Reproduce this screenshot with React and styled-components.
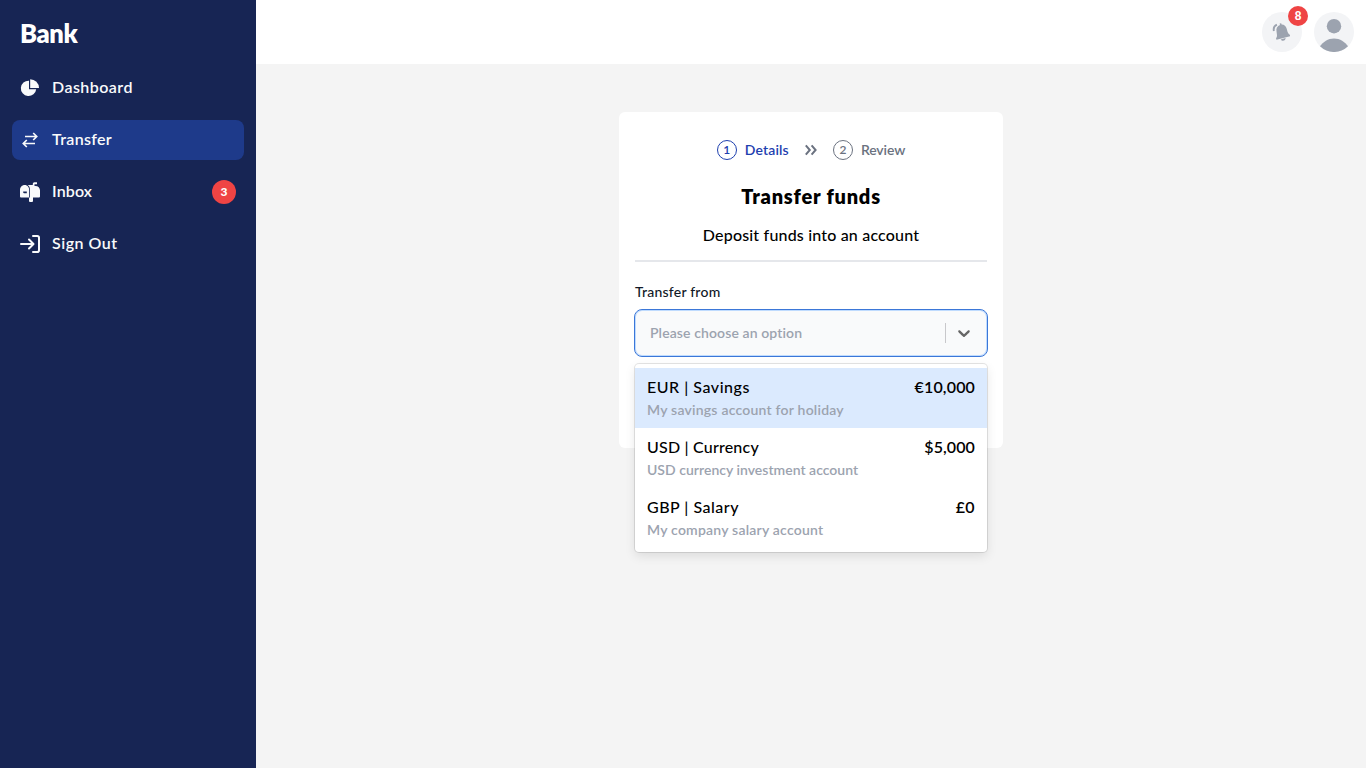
import React from "react";
import styled, { createGlobalStyle } from "styled-components";

const Global = createGlobalStyle`
  * { box-sizing: border-box; }
  body { margin: 0; background: #f4f4f4; font-family: Lato, "Open Sans", sans-serif; font-size: 16px; line-height: 24px; font-weight: 500; color: #000; }
  svg { display: block; flex: none; }
`;
const Shell = styled.div`display: flex; height: 100vh; overflow: hidden;`;
const Sidebar = styled.aside`width: 256px; flex: none; background: #172554; padding: 12px; color: #fff;`;
const Brand = styled.div`height: 44px; padding-left: 8px; font-size: 25.5px; line-height: 43px; font-weight: 800; letter-spacing: -0.4px;`;
const Nav = styled.nav`display: flex; flex-direction: column; gap: 12px; margin-top: 12px;`;
const NavItem = styled.a`
  display: flex; align-items: center; height: 40px; padding: 0 8px; border-radius: 8px;
  font-weight: 600; color: #f9fafb;
  background: ${(p) => (p.$active ? "#1e3a8a" : "transparent")};
`;
const NavLabel = styled.span`
  flex: 1; margin-left: 12px; padding-bottom: 3px; white-space: nowrap;
  letter-spacing: ${(p) => p.$tracking || 0}px;
`;
const Badge = styled.span`
  width: ${(p) => p.$size}px; height: ${(p) => p.$size}px; border-radius: 50%;
  display: flex; align-items: center; justify-content: center;
  background: #ef4444; color: #fff; font-size: 12px; font-weight: 900; line-height: 12px; padding-bottom: 1px;
`;
const Main = styled.div`flex: 1; display: flex; flex-direction: column; align-items: center;`;
const Topbar = styled.header`
  width: 100%; height: 64px; background: #fff; padding: 0 12px;
  display: flex; align-items: center; justify-content: flex-end; gap: 12px;
`;
const RoundButton = styled.button`
  position: relative; width: 40px; height: 40px; padding: 0; border: 0; border-radius: 50%; background: #f3f4f6;
  display: flex; align-items: center; justify-content: center;
  & > ${Badge} { position: absolute; top: -6px; right: -6px; }
`;
const Card = styled.section`
  margin-top: 48px; width: 384px; height: 336px; background: #fff; border-radius: 6px; padding: 28px 16px 16px;
`;
const Steps = styled.div`display: flex; align-items: center; justify-content: center; height: 20px; gap: 16px;`;
const Step = styled.div`
  display: flex; align-items: center; gap: 8px; font-size: 14px; line-height: 20px; font-weight: 600;
  letter-spacing: ${(p) => p.$tracking || 0}px;
  color: ${(p) => (p.$active ? "#1e40af" : "#6b7280")};
`;
const StepNumber = styled.span`
  width: 20px; height: 20px; border: 1px solid currentColor; border-radius: 50%;
  display: flex; align-items: center; justify-content: center; font-size: 12px; line-height: 18px; letter-spacing: 0;
`;
const Title = styled.h1`margin: 22px 0 0; text-align: center; font-size: 20px; line-height: 28px; font-weight: 800; letter-spacing: 0.78px;`;
const Subtitle = styled.p`
  margin: 0; padding: 13px 0 13px; text-align: center; border-bottom: 2px solid #e5e7eb;
  letter-spacing: 0.18px;
`;
const FieldLabel = styled.label`display: block; margin-top: 20px; font-size: 14px; line-height: 20px; letter-spacing: 0.22px; color: #111827;`;
const Field = styled.div`position: relative; margin-top: 7px;`;
const Control = styled.div`
  height: 48px; margin: 0 -1px; display: flex; align-items: center; background: #f9fafb;
  border: 1px solid #3b77d8; border-radius: 8px; box-shadow: inset 0 0 0 1px #bfdbfe;
`;
const Placeholder = styled.span`flex: 1; padding-left: 15px; font-size: 14px; line-height: 20px; font-weight: 600; letter-spacing: 0.11px; color: #9ca3af;`;
const Chevron = styled.span`
  width: 42px; height: 20px; border-left: 1px solid #c8c8cb;
  display: flex; align-items: center; justify-content: center; padding-right: 6px;
`;
const Menu = styled.div`
  position: absolute; z-index: 1; top: 55px; left: 0; right: 0; padding: 4px 0; background: #fff; border-radius: 4px;
  box-shadow: 0 0 0 1px rgba(0,0,0,.1), 0 4px 11px rgba(0,0,0,.1);
`;
const Option = styled.div`height: 60px; padding: 7px 12px; background: ${(p) => (p.$focused ? "#dbeafe" : "#fff")};`;
const OptionHead = styled.div`display: flex; justify-content: space-between; height: 24px; white-space: nowrap;`;
const Name = styled.span`letter-spacing: ${(p) => p.$tracking}px;`;
const Amount = styled.span`letter-spacing: ${(p) => p.$tracking}px; font-weight: 600;`;
const Note = styled.div`font-size: 14px; line-height: 21px; font-weight: 600; color: #9ca3af; white-space: nowrap; letter-spacing: ${(p) => p.$tracking}px;`;

const PieIcon = () => (
  <svg width="20" height="20" viewBox="0 0 20 20" fill="currentColor">
    <path d="M9 2.700V11.200H16.200A7.700 7.700 0 1 1 9 2.700Z" />
    <path d="M10.200 1.200A8.800 8.800 0 0 1 19 10H10.200Z" />
  </svg>
);
const TransferIcon = () => (
  <svg width="20" height="20" viewBox="0 0 20 20" fill="none" stroke="currentColor" strokeWidth="1.700">
    <path d="M5 6.500h11.500M13.200 3l3.500 3.500-3.500 3.500M15 13.500H3.500M6.800 10l-3.500 3.500L6.800 17" />
  </svg>
);
const MailboxIcon = () => (
  <svg width="20" height="20" viewBox="0 0 20 20" fill="currentColor">
    <path fillRule="evenodd" d="M4.700 3C2 3 0 5.200 0 8V14.500Q0 15.500 1 15.500H9.200V8C9.200 5.200 7.500 3 4.700 3ZM3.200 9.500H6.800V11.300H4.200Q3.200 11.300 3.200 10.300Z" />
    <path d="M7.800 3H12.800V1.800Q12.800 .3 14.300 .3H17V2.300H14.500V7H13.700V4H15.500C18.200 4 20 6 20 8.300V14.500Q20 15.500 19 15.500H13V19Q13 20 12 20H10Q9 20 9 19V15.500H10V8C10 5.800 9.300 4 7.800 3Z" />
  </svg>
);
const SignOutIcon = () => (
  <svg width="20" height="20" viewBox="0 0 20 20" fill="none" stroke="currentColor" strokeWidth="2" strokeLinecap="round" strokeLinejoin="round">
    <path d="M1 10h12M9 5.500l4.500 4.500L9 14.500M13 2h4.200Q19 2 19 3.800v12.400Q19 18 17.200 18H13" />
  </svg>
);
const BellIcon = () => (
  <svg width="20" height="20" viewBox="0 0 20 20" fill="#9ca3af">
    <path d="M7.600 1.600 9.200 1.200 9.600 2.600C12.200 2.500 14 4.200 14.700 6.800L15.600 10.100Q16 11.500 18 13V14.200L4.500 17.700 4 16.500Q5.200 14.800 5 13.300L4.500 9.300C4 6.500 5.200 4.400 8 3.100Z" />
    <path d="m8.600 17.400 5-1.300c.2 2.700-3.500 3.600-5 1.300Z" />
    <path d="M1.900 9C1.200 6 2.300 3.800 4.900 2.600" fill="none" stroke="#9ca3af" strokeWidth="1.900" />
  </svg>
);
const AvatarIcon = () => (
  <svg width="40" height="40" viewBox="0 0 40 40" fill="#9ca3af">
    <circle cx="20" cy="14.200" r="7.200" />
    <path d="M6 34.300C9 29.700 14 26.400 20 26.400s11 3.300 14 7.900A20 20 0 0 1 6 34.300Z" />
  </svg>
);
const DoubleChevron = () => (
  <svg width="12" height="12" viewBox="0 0 12 12" fill="none" stroke="#6b7280" strokeWidth="2">
    <path d="m.8 1.400 4 4.600-4 4.600M6.600 1.400l4 4.600-4 4.600" />
  </svg>
);
const ChevronIcon = () => (
  <svg width="20" height="20" viewBox="0 0 20 20" fill="#666">
    <path d="M4.516 7.548c0.436-0.446 1.043-0.481 1.576 0l3.908 3.747 3.908-3.747c0.533-0.481 1.141-0.446 1.574 0 0.436 0.445 0.408 1.197 0 1.615-0.406 0.418-4.695 4.502-4.695 4.502-0.217 0.223-0.502 0.335-0.787 0.335s-0.570-0.112-0.789-0.335c0 0-4.287-4.084-4.695-4.502s-0.436-1.170 0-1.615z" />
  </svg>
);

const links = [
  { label: "Dashboard", icon: <PieIcon />, tracking: 0.45 },
  { label: "Transfer", icon: <TransferIcon />, active: true, tracking: 0.32 },
  { label: "Inbox", icon: <MailboxIcon />, count: 3, tracking: 0.15 },
  { label: "Sign Out", icon: <SignOutIcon />, tracking: 0.5 },
];
const accounts = [
  { name: "EUR | Savings", amount: "€10,000", note: "My savings account for holiday", t: [0.52, 0.15, 0.22] },
  { name: "USD | Currency", amount: "$5,000", note: "USD currency investment account", t: [0.2, 0.1, 0.02] },
  { name: "GBP | Salary", amount: "£0", note: "My company salary account", t: [0.5, 0.4, 0.22] },
];

export default function App() {
  return (
    <Shell>
      <Global />
      <Sidebar>
        <Brand>Bank</Brand>
        <Nav>
          {links.map((l) => (
            <NavItem key={l.label} $active={l.active}>
              {l.icon}
              <NavLabel $tracking={l.tracking}>{l.label}</NavLabel>
              {l.count && <Badge $size={24}>{l.count}</Badge>}
            </NavItem>
          ))}
        </Nav>
      </Sidebar>
      <Main>
        <Topbar>
          <RoundButton aria-label="Notifications"><BellIcon /><Badge $size={20}>8</Badge></RoundButton>
          <RoundButton aria-label="Account"><AvatarIcon /></RoundButton>
        </Topbar>
        <Card>
          <Steps>
            <Step $active $tracking={0.15}><StepNumber>1</StepNumber>Details</Step>
            <DoubleChevron />
            <Step $tracking={-0.1}><StepNumber>2</StepNumber>Review</Step>
          </Steps>
          <Title>Transfer funds</Title>
          <Subtitle>Deposit funds into an account</Subtitle>
          <FieldLabel>Transfer from</FieldLabel>
          <Field>
            <Control>
              <Placeholder>Please choose an option</Placeholder>
              <Chevron><ChevronIcon /></Chevron>
            </Control>
            <Menu>
              {accounts.map((a, i) => (
                <Option key={a.name} $focused={i === 0}>
                  <OptionHead>
                    <Name $tracking={a.t[0]}>{a.name}</Name>
                    <Amount $tracking={a.t[1]}>{a.amount}</Amount>
                  </OptionHead>
                  <Note $tracking={a.t[2]}>{a.note}</Note>
                </Option>
              ))}
            </Menu>
          </Field>
        </Card>
      </Main>
    </Shell>
  );
}
